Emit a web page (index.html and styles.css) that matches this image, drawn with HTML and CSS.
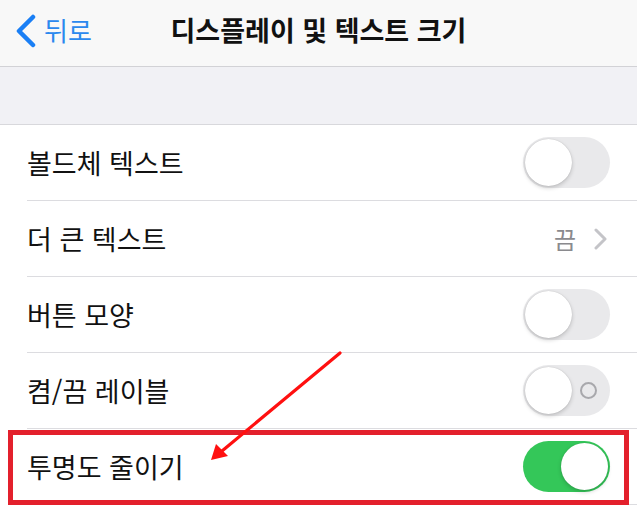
FILE: index.html
```html
<!DOCTYPE html>
<html lang="ko">
<head>
<meta charset="utf-8">
<link rel="stylesheet" href="styles.css">
</head>
<body>
<div class="screen">
  <header class="nav">
    <div class="back">
      <svg class="back-chev" width="22" height="34" viewBox="0 0 22 34"><path d="M18 3 L4 17 L18 31" fill="none" stroke="#1a7ff5" stroke-width="4.5" stroke-linecap="round" stroke-linejoin="round"/></svg>
      <span class="back-label">뒤로</span>
    </div>
    <div class="title">디스플레이 및 텍스트 크기</div>
    <div></div>
  </header>
  <div class="spacer"></div>
  <ul class="list">
    <li class="row"><span class="label">볼드체 텍스트</span><span class="toggle"><span class="knob"></span></span></li>
    <li class="row"><span class="label">더 큰 텍스트</span><span class="detail"><span class="value">끔</span><svg width="15" height="22" viewBox="0 0 15 22"><path d="M3 2 L12 11 L3 20" fill="none" stroke="#c4c4c8" stroke-width="3" stroke-linecap="round" stroke-linejoin="round"/></svg></span></li>
    <li class="row"><span class="label">버튼 모양</span><span class="toggle"><span class="knob"></span></span></li>
    <li class="row"><span class="label">켬/끔 레이블</span><span class="toggle"><span class="ring"></span><span class="knob"></span></span></li>
    <li class="row"><span class="label">투명도 줄이기</span><span class="toggle on"><span class="knob"></span></span></li>
  </ul>
  <div class="highlight"></div>
  <svg class="arrow" width="637" height="508" viewBox="0 0 637 508">
    <line x1="340" y1="353" x2="222" y2="451" stroke="#ff1010" stroke-width="3.2" stroke-linecap="round"/>
    <polygon points="211,460 216,444 228,456" fill="#ff1010"/>
  </svg>
</div>
</body>
</html>
```
FILE: styles.css
```css
* { box-sizing: border-box; }
html, body { margin: 0; padding: 0; }
body {
  width: 637px;
  height: 508px;
  overflow: hidden;
  background: #ffffff;
  font-family: "Noto Sans CJK KR", "Noto Sans", sans-serif;
  color: #000;
}
.screen { position: relative; width: 637px; height: 508px; }
.nav {
  height: 67px;
  background: #f8f8f8;
  border-bottom: 1px solid #d2d2d6;
  display: grid;
  grid-template-columns: 1fr auto 1fr;
  align-items: center;
  padding-bottom: 6px;
}
.back {
  display: flex;
  align-items: center;
  padding-left: 15px;
  color: #2a88ee;
}
.back-chev { display: block; margin-top: 2px; }
.back-label {
  font-size: 26px;
  line-height: 30px;
  margin-left: 7px;
}
.title {
  font-size: 27px;
  font-weight: 700;
  line-height: 30px;
  color: #111;
}
.spacer {
  height: 58px;
  background: #f1f1f5;
  border-bottom: 1px solid #d8d8dc;
}
.list { list-style: none; margin: 0; padding: 0; }
.row {
  height: 76px;
  margin-left: 27px;
  padding-right: 27px;
  border-bottom: 1px solid #dcdce0;
  display: flex;
  align-items: center;
  justify-content: space-between;
}
.label {
  font-size: 27px;
  line-height: 32px;
  color: #111;
}
.toggle {
  position: relative;
  width: 87px;
  height: 51px;
  border-radius: 26px;
  background: #e9e9eb;
  display: block;
}
.toggle .knob {
  position: absolute;
  top: 2px;
  left: 2px;
  width: 47px;
  height: 47px;
  border-radius: 50%;
  background: #fff;
  box-shadow: 0 2px 4px rgba(0,0,0,0.18), 0 0 1px rgba(0,0,0,0.2);
}
.toggle.on { background: #34c759; }
.toggle.on .knob { left: 38px; }
.toggle .ring {
  position: absolute;
  right: 13px;
  top: 17px;
  width: 17px;
  height: 17px;
  border-radius: 50%;
  border: 2px solid #a8a8ac;
}
.detail {
  display: flex;
  align-items: center;
  gap: 17px;
  margin-right: 2px;
}
.detail svg { display: block; }
.value {
  font-size: 24px;
  line-height: 28px;
  color: #8a8a8e;
}
.highlight {
  position: absolute;
  left: 8px;
  top: 430px;
  width: 621px;
  height: 75px;
  border: 5px solid #e3202c;
}
.arrow { position: absolute; left: 0; top: 0; pointer-events: none; }
```
